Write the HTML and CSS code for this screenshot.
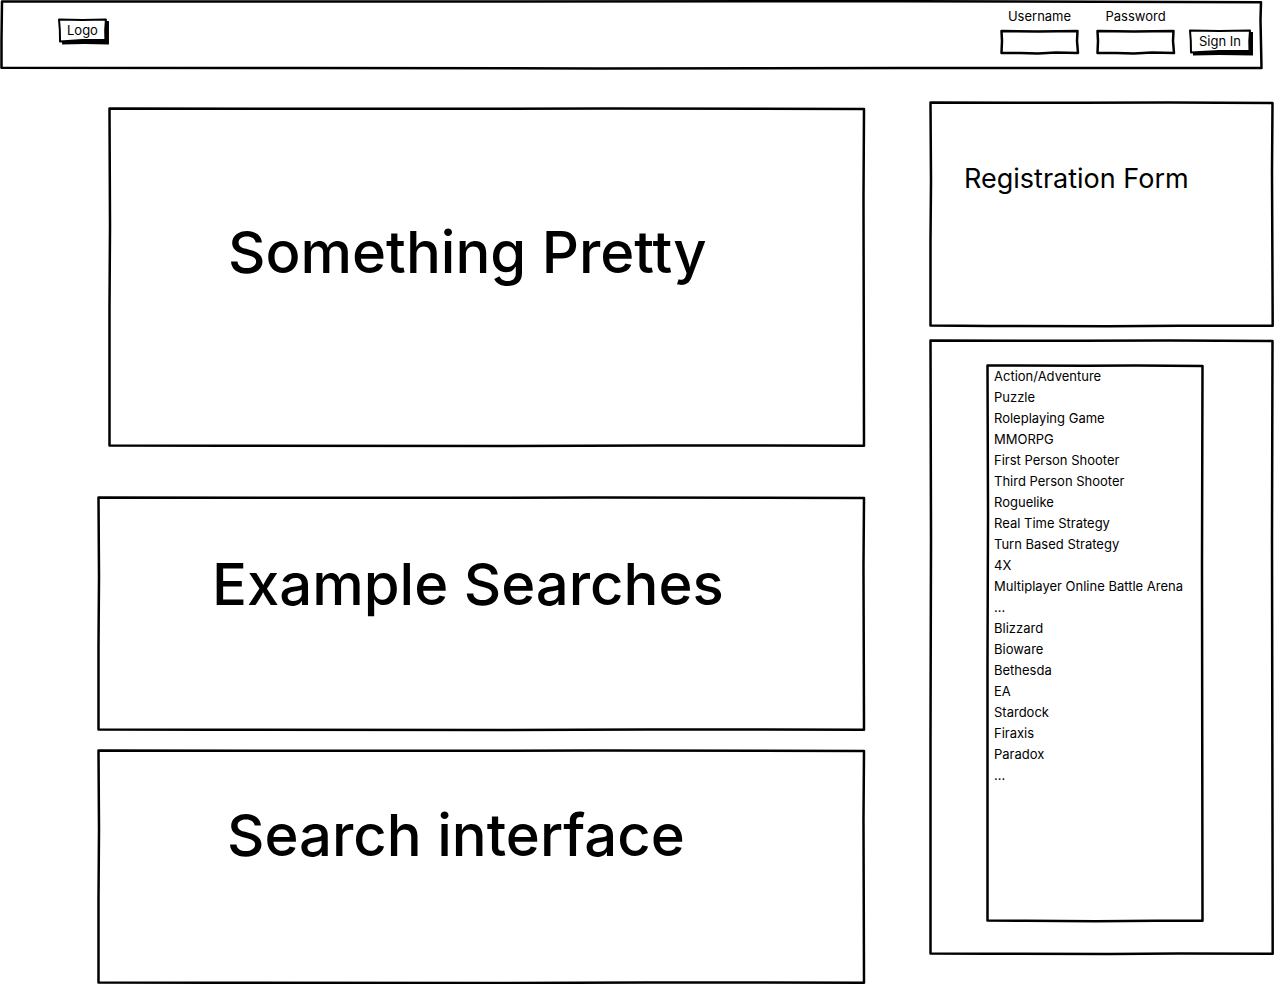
FILE: index.html
```html
<!DOCTYPE html>
<html lang="en">
<head>
<meta charset="utf-8">
<meta name="viewport" content="width=device-width, initial-scale=1">
<title>Game Search</title>
<link rel="stylesheet" href="styles.css">
</head>
<body>
<header class="topbar sketch">
  <svg class="frame" viewBox="0 0 1263 70" preserveAspectRatio="none" aria-hidden="true"><path d="M2 1.500L500 1.500L900 1.200L1261 2.200L1260.500 20L1261.500 68L900 68L600 68.500L300 68L1.500 67.800L1.500 40Z"/></svg>
  <button class="btn logo sketch" type="button"><svg class="frame" viewBox="0 0 48 25" preserveAspectRatio="none" aria-hidden="true"><path class="shade" d="M4 20L46 20L46 3L50 3L50 26.500L26 26L4 26.500Z"/><path class="thin" d="M1 1.500L24 2L47 1.500L46.300 12L46.500 22L24 22L2 23.500L1.800 12Z"/></svg>Logo</button>
  <form class="signin">
    <div class="field">
      <label for="user">Username</label>
      <span class="box sketch"><svg class="frame" viewBox="0 0 79 26" preserveAspectRatio="none" aria-hidden="true"><path d="M1.500 2L38 2.600L77.500 2L77 12L78 24L56 23.400L38 24.500L20 24L1.500 24L2 12Z"/></svg><input id="user" type="text"></span>
    </div>
    <div class="field">
      <label for="pass">Password</label>
      <span class="box sketch"><svg class="frame" viewBox="0 0 79 26" preserveAspectRatio="none" aria-hidden="true"><path d="M1.500 2L38 2.600L77.500 2L77 12L78 24L56 23.400L38 24.500L20 24L1.500 24L2 12Z"/></svg><input id="pass" type="password"></span>
    </div>
    <button class="btn sketch" type="button"><svg class="frame" viewBox="0 0 62 25" preserveAspectRatio="none" aria-hidden="true"><path class="shade" d="M4 20L60 20L60 3L64 3L64 26.500L30 26L4 26.500Z"/><path class="thin" d="M1 1.500L30 2L61 1.500L60.300 12L60.500 22L30 22L2 23.500L1.800 12Z"/></svg>Sign In</button>
  </form>
</header>
<div class="page">
  <main class="content">
    <section class="panel hero sketch">
      <svg class="frame" viewBox="0 0 757 340" preserveAspectRatio="none" aria-hidden="true"><path d="M1.500 1.500L300 1.800L500 1.500L756 2L755.500 90L756 338.700L550 338.500L400 339L120 338.700L1.500 338.500L1.500 200L2 120Z"/></svg>
      <h1>Something Pretty</h1>
    </section>
    <section class="panel examples sketch">
      <svg class="frame" viewBox="0 0 768 235" preserveAspectRatio="none" aria-hidden="true"><path d="M1.500 1.500L300 1.800L500 1.500L767 2L766.500 70L767 233.700L550 233.500L400 234L120 233.700L1.500 233.500L1.500 150L2 80Z"/></svg>
      <h2>Example Searches</h2>
    </section>
    <section class="panel search sketch">
      <svg class="frame" viewBox="0 0 768 235" preserveAspectRatio="none" aria-hidden="true"><path d="M1.500 1.500L300 1.800L500 1.500L767 2L766.500 70L767 233.700L550 233.500L400 234L120 233.700L1.500 233.500L1.500 150L2 80Z"/></svg>
      <h2>Search interface</h2>
    </section>
  </main>
  <aside class="side">
    <section class="panel register sketch">
      <svg class="frame" viewBox="0 0 345 226" preserveAspectRatio="none" aria-hidden="true"><path d="M1.500 1.500L150 1.800L240 1.500L343.500 2L343 70L343.700 224.700L250 224.700L180 225.200L60 225L1.500 224.600L1.500 140L2 80Z"/></svg>
      <h2>Registration Form</h2>
    </section>
    <section class="panel browse sketch">
      <svg class="frame" viewBox="0 0 345 616" preserveAspectRatio="none" aria-hidden="true"><path d="M1.500 1.500L150 1.800L240 1.500L343.500 2L343 200L343.700 614.700L250 614.500L180 615L60 614.700L1.500 614.500L1.500 400L2 200Z"/></svg>
      <div class="listbox sketch">
        <svg class="frame" viewBox="0 0 218 558" preserveAspectRatio="none" aria-hidden="true"><path d="M1.500 1.500L100 1.800L150 1.500L216.500 2L216 200L216.500 556.700L170 556.700L110 557.200L40 556.800L1.500 556.500L1.500 300L2 150Z"/></svg>
        <ul>
          <li>Action/Adventure</li>
          <li>Puzzle</li>
          <li>Roleplaying Game</li>
          <li>MMORPG</li>
          <li>First Person Shooter</li>
          <li>Third Person Shooter</li>
          <li>Roguelike</li>
          <li>Real Time Strategy</li>
          <li>Turn Based Strategy</li>
          <li>4X</li>
          <li>Multiplayer Online Battle Arena</li>
          <li>...</li>
          <li>Blizzard</li>
          <li>Bioware</li>
          <li>Bethesda</li>
          <li>EA</li>
          <li>Stardock</li>
          <li>Firaxis</li>
          <li>Paradox</li>
          <li>...</li>
        </ul>
      </div>
    </section>
  </aside>
</div>
</body>
</html>
```
FILE: styles.css
```css
* { box-sizing: border-box; }

body {
  margin: 0;
  background: #fff;
  color: #000;
  font: 13px/21px Inter, "Liberation Sans", sans-serif;
}

h1, h2, ul { margin: 0; padding: 0; }

/* Hand-drawn outline stretched behind a box */
.sketch { position: relative; isolation: isolate; }
.frame {
  position: absolute;
  inset: 0;
  z-index: -1;
  width: 100%;
  height: 100%;
  overflow: visible;
}
.frame path {
  fill: #fff;
  stroke: #000;
  stroke-width: 2.5;
  stroke-linejoin: round;
  vector-effect: non-scaling-stroke;
}
.frame .thin { stroke-width: 2; }
.frame .shade { fill: #000; stroke: none; }

.topbar {
  display: flex;
  justify-content: space-between;
  align-items: flex-start;
  min-height: 70px;
  margin-right: 11px;
  padding: 6px 12px 0 58px;
}

.btn {
  height: 25px;
  padding: 0 10px;
  border: 0;
  background: none;
  color: inherit;
  font: inherit;
}
.logo {
  margin-top: 12px;
  padding: 0 9px;
}

.signin {
  display: flex;
  align-items: flex-end;
  gap: 14px;
}
.signin .btn { margin-bottom: 1px; }
.field {
  display: flex;
  flex-direction: column;
  align-items: center;
  gap: 2px;
}
.field + .field { margin-left: 3px; }
.box { width: 79px; height: 26px; }
.box input {
  display: block;
  width: 100%;
  height: 100%;
  padding: 0 6px;
  border: 0;
  background: none;
  font: inherit;
}

.page {
  display: grid;
  grid-template-columns: minmax(0, 1fr) 345px;
  gap: 64px;
  padding: 31px 0 0 97px;
}
.content { display: flex; flex-direction: column; }
.side { display: flex; flex-direction: column; gap: 12px; }

.content h1, .content h2 {
  font-size: 58px;
  line-height: 72px;
  font-weight: 500;
  white-space: nowrap;
}
.hero {
  min-height: 340px;
  margin: 6px 0 49px 11px;
  padding: 109px 0 0 120px;
}
.examples {
  min-height: 235px;
  margin-bottom: 18px;
  padding: 52px 0 0 115px;
}
.search {
  min-height: 235px;
  padding: 50px 0 0 130px;
}

.register {
  min-height: 226px;
  padding: 62px 0 0 35px;
}
.register h2 {
  font-size: 27px;
  line-height: 32px;
  font-weight: 400;
}

.browse {
  min-height: 616px;
  padding: 25px 70px 33px 57px;
}
.listbox {
  min-height: 558px;
  padding: 2px 8px;
}
.listbox ul { list-style: none; }
```
